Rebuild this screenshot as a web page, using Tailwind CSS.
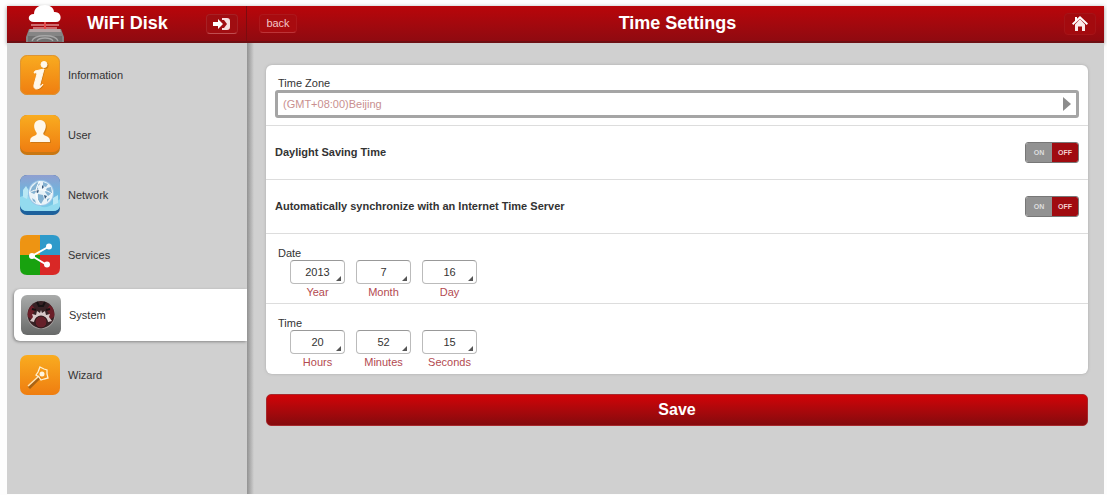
<!DOCTYPE html>
<html lang="en">
<head>
<meta charset="utf-8">
<meta name="viewport" content="width=device-width, initial-scale=1">
<title>WiFi Disk - Time Settings</title>
<script src="https://cdn.jsdelivr.net/npm/@tailwindcss/browser@4"></script>
</head>
<body class="bg-[#fdfdfd] font-['Liberation_Sans',Arial,sans-serif] text-[11px] text-[#333]">
<div class="flex min-h-screen flex-col pt-1.5 pr-[3px] pb-px pl-[7px]">
  <header class="flex h-[37px] border-b-2 border-[#6e1014] bg-linear-to-b from-[#b90509] to-[#8f0a10] text-white shadow-[0_1px_4px_#999]">
    <div class="flex w-60 shrink-0 items-center border-r border-[#7c0b0f] pr-2 pl-[18px]">
      <svg class="h-[37px] w-10 shrink-0" viewBox="0 0 40 37" aria-hidden="true">
        <path d="M4 24h32l3 8v5H1v-5z" fill="#858585"/>
        <path d="M5 24h30l1 3H4z" fill="#b5a5a5"/>
        <path d="M3 31h34v6H3z" fill="#707070"/>
        <path d="M7 36c2-7 24-7 26 0M12 36c2-4 14-4 16 0" fill="none" stroke="#a8a8a8" stroke-width="1.3"/>
        <path d="M6 20h28M8 23h24" stroke="#dc8d8f" stroke-width="1.3"/>
        <path d="M20 17v7" stroke="#e54a4a" stroke-width="2"/>
        <path d="M9 17c-7 0-7-8 0-8C9 3 14 0 20 0c5 0 9 3 9 7 8-1 9 10 2 10z" fill="#fff"/>
      </svg>
      <h1 class="flex-1 pl-[22px] text-[18px] font-bold">WiFi Disk</h1>
      <button type="button" aria-label="Log out" class="flex h-5 w-8 items-center justify-center rounded border border-[#a62125] border-b-[#bf4d50] bg-[#a00d11]">
        <svg class="h-3.5 w-[18px]" viewBox="0 0 18 14" aria-hidden="true">
          <path d="M0 5h5V2l5 5-5 5V9H0z" fill="#fff"/>
          <path d="M9 1h5q3 0 3 3v6q0 3-3 3H9v-2h2l3-4-3-4H9z" fill="#f6dede"/>
        </svg>
      </button>
    </div>
    <div class="grid flex-1 grid-cols-[60px_1fr_60px] items-center pr-2 pl-3">
      <button type="button" class="h-[19px] w-[38px] rounded border border-[#ad171b] border-b-[#bd3438] bg-[#a80b0f] text-[11px] leading-none text-[#f3c6c6]">back</button>
      <h2 class="text-center text-[18px] font-bold">Time Settings</h2>
      <a href="#home" aria-label="Home" class="flex h-[22px] w-8 items-center justify-center justify-self-end rounded border border-[#a51418] bg-[#a30a0e]">
        <svg class="h-[15px] w-4" viewBox="0 0 16 15" aria-hidden="true">
          <path d="M8 0 16 7.500 14.700 9 8 2.800 1.300 9 0 7.500 3 4.700V1h2v1.800z" fill="#fff"/>
          <path d="M8 3l5 5.500V15H10v-4.500H6V15H3V8.500z" fill="#fbeaea"/>
        </svg>
      </a>
    </div>
  </header>

  <div class="flex flex-1 bg-[#d0d0d0]">
    <nav aria-label="Settings" class="w-60 shrink-0 pt-0.5">
      <a href="#information" class="flex h-[60px] items-center gap-2 pl-[13px]">
        <svg class="size-10" viewBox="0 0 40 40" aria-hidden="true">
          <defs>
            <linearGradient id="orange" x2="0" y2="1"><stop stop-color="#f9ac20"/><stop offset="1" stop-color="#ef7d10"/></linearGradient>
          </defs>
          <rect width="40" height="40" rx="7" fill="url(#orange)"/>
          <rect x=".5" y=".5" width="39" height="39" rx="7" fill="none" stroke="#dc9435"/>
          <g transform="translate(1 1)" fill="#b66a13" opacity=".6"><circle cx="24" cy="9.500" r="3.500"/><path d="M15 16l9-2-4 15c-.5 3 1 2 3 0-3 6-10 7-9 1l3-11q0-2-3-1z"/></g>
          <g fill="#fff8ea" stroke="#fff8ea"><circle cx="24" cy="9.500" r="3"/><path d="M15 16l9-2-4 15c-.5 3 1 2 3 0-3 6-10 7-9 1l3-11q0-2-3-1z"/></g>
        </svg>
        <span>Information</span>
      </a>
      <a href="#user" class="flex h-[60px] items-center gap-2 pl-[13px]">
        <svg class="size-10" viewBox="0 0 40 40" aria-hidden="true">
          <rect width="40" height="40" rx="7" fill="#c97712"/>
          <rect width="40" height="37" rx="7" fill="url(#orange)"/>
          <path d="M11 28c0-5 2-5 6-7 1-1 1-2 0-3-5-7-1-12 4-12s8 5 4 12c-1 1-1 2 0 3 4 2 6 2 6 7z" fill="#b66a13" opacity=".6"/>
          <path d="M10 27c0-5 2-5 6-7 1-1 1-2 0-3-4-7-1-12 4-12s8 5 4 12c-1 1-1 2 0 3 4 2 6 2 6 7z" fill="#fff8ea"/>
        </svg>
        <span>User</span>
      </a>
      <a href="#network" class="flex h-[60px] items-center gap-2 pl-[13px]">
        <svg class="size-10" viewBox="0 0 40 40" aria-hidden="true">
          <defs>
            <linearGradient id="sky" x2="0" y2="1"><stop stop-color="#8f9fd0"/><stop offset=".5" stop-color="#6eb6de"/><stop offset="1" stop-color="#7fd2ea"/></linearGradient>
          </defs>
          <rect width="40" height="40" rx="7" fill="#1d619c"/>
          <rect width="40" height="36" rx="7" fill="url(#sky)"/>
          <path d="M0 22q10-4 17 6t23-4v7q-1 5-7 5H7q-6 0-7-6z" fill="#93dbef"/>
          <path d="M3 15l3-4 3 5-2 8-4-2zM33 23l5-3v8l-5 2z" fill="#b9e8f5"/>
          <circle cx="21" cy="18" r="13" fill="#9bc6e8"/>
          <circle cx="21" cy="18" r="12" fill="#e9f3f8"/>
          <path d="M12 12l5-5 3 2-3 3 2 3-5 4-4-2zM23 7l5 2-2 3-3-1zM27 13l4-1 1 6-4 3-3-4zM18 19l5 1 1 4-3 5-3-3zM12 23l3 2 1 3-3-2zM27 24l3-1-3 4z" fill="#84b2d2"/>
          <path d="M17 14l2 1-1 3-3-1zM22 10l2 2-2 2zM24 20l3 1-2 3z" fill="#37597d"/>
          <path d="M9 18c6-5 18-4 23 1M20 6c-6 8-5 17 1 24" fill="none" stroke="#fff"/>
        </svg>
        <span>Network</span>
      </a>
      <a href="#services" class="flex h-[60px] items-center gap-2 pl-[13px]">
        <svg class="size-10" viewBox="0 0 40 40" aria-hidden="true">
          <path d="M20 0v20H0V7q0-7 7-7z" fill="#ee9412"/>
          <path d="M20 0h13q7 0 7 7v13H20z" fill="#2e9aca"/>
          <path d="M0 20h20v20H7q-7 0-7-7z" fill="#18a20f"/>
          <path d="M20 20h20v13q0 7-7 7H20z" fill="#d92826"/>
          <path d="M29 11.500 12 21l15 9" fill="none" stroke="#fff" stroke-width="2"/>
          <g fill="#fff"><circle cx="29" cy="11.500" r="3"/><circle cx="12" cy="21" r="3"/><circle cx="27" cy="29.500" r="3"/></g>
        </svg>
        <span>Services</span>
      </a>
      <a href="#system" aria-current="page" class="my-1 ml-[7px] flex h-[52px] items-center gap-2 rounded-l-md bg-white pl-[7px] shadow-[-1px_1px_3px_#888]">
        <svg class="size-10" viewBox="0 0 40 40" aria-hidden="true">
          <defs>
            <linearGradient id="steel" x2="0" y2="1"><stop stop-color="#a9abaa"/><stop offset="1" stop-color="#686a69"/></linearGradient>
          </defs>
          <rect width="40" height="40" rx="6" fill="url(#steel)"/>
          <circle cx="20" cy="20" r="14" fill="#a7a0a0"/>
          <circle cx="20" cy="19.500" r="13.500" fill="#372225"/>
          <path d="M7 22a13 13 0 0 1 4-12l4 5-3 3 2 3-2 4zM33 22a13 13 0 0 0-4-12l-4 5 3 3-2 3 2 4z" fill="#6b1e28"/>
          <path d="M9 26l3-4-1-3 4 1 1-4 3 2 1-3 1 3 3-2 1 4 4-1-1 3 3 4-4 1q-1-6-7-6t-7 6z" fill="#d8c9c9"/>
          <circle cx="20" cy="27" r="6" fill="#66202a" stroke="#2f1b1e"/>
          <path d="M16 7l2 4h4l2-4M11 14l4 1M29 14l-4 1" stroke="#171213" stroke-width="2" fill="none"/>
        </svg>
        <span>System</span>
      </a>
      <a href="#wizard" class="flex h-[60px] items-center gap-2 pl-[13px]">
        <svg class="size-10" viewBox="0 0 40 40" aria-hidden="true">
          <rect width="40" height="40" rx="7" fill="url(#orange)"/>
          <path d="M9 33 20 22" stroke="#a96314" stroke-width="3"/>
          <path d="M8 31 19 21" stroke="#ffe4b5" stroke-width="1.500"/>
          <path d="M20 12l4 2 3 1 0 4 1 4-4 1-3 1-2-3-3-2 2-3z" fill="none" stroke="#fff1d3" stroke-width="1.300"/>
          <circle cx="22" cy="19" r="2.500" fill="#fff6e0"/>
        </svg>
        <span>Wizard</span>
      </a>
    </nav>

    <main class="flex-1 bg-linear-to-r from-[#929292] to-[#d0d0d0] to-[7px] pt-[22px] pr-4 pb-5 pl-[19px]">
      <form>
        <div class="divide-y divide-[#ddd] rounded-md bg-white shadow-[0_0_3px_#aaa]">
          <div class="h-[61px] px-[9px] pt-[11px]">
            <label for="zone" class="block pl-[3px] leading-[14px]">Time Zone</label>
            <div class="relative">
              <select id="zone" class="block h-7 w-full appearance-none rounded-[3px] border-[3px] border-[#a5a5a5] bg-white pl-[5px] text-[11px] text-[#c98f8f]">
                <option>(GMT+08:00)Beijing</option>
              </select>
              <svg class="pointer-events-none absolute top-[7px] right-2 h-3.5 w-2" viewBox="0 0 8 14" aria-hidden="true"><path d="M0 0l8 7-8 7z" fill="#8c8c8c"/></svg>
            </div>
          </div>
          <label class="flex h-[54px] items-center justify-between px-[9px]">
            <span class="text-[11px] font-bold">Daylight Saving Time</span>
            <input type="checkbox" class="peer sr-only">
            <span aria-hidden="true" class="grid h-[21px] w-[54px] grid-cols-2 overflow-hidden rounded-[3px] border border-[#777] text-center text-[7px] leading-[19px] font-bold">
              <span class="bg-[#929292] text-[#dedede]">ON</span><span class="bg-[#a00b10] text-[#f3d0d0]">OFF</span>
            </span>
          </label>
          <label class="flex h-[54px] items-center justify-between px-[9px]">
            <span class="text-[11px] font-bold">Automatically synchronize with an Internet Time Server</span>
            <input type="checkbox" class="peer sr-only">
            <span aria-hidden="true" class="grid h-[21px] w-[54px] grid-cols-2 overflow-hidden rounded-[3px] border border-[#777] text-center text-[7px] leading-[19px] font-bold">
              <span class="bg-[#929292] text-[#dedede]">ON</span><span class="bg-[#a00b10] text-[#f3d0d0]">OFF</span>
            </span>
          </label>
          <fieldset class="h-[70px] px-3 pt-3">
            <legend class="float-left w-full leading-[14px]">Date</legend>
            <div class="flex gap-[11px] pl-3 text-center text-[#b34a50]">
              <label class="relative flex w-[55px] flex-col-reverse leading-4">Year
                <input type="text" inputmode="numeric" value="2013" class="h-6 w-full rounded-[4px] border border-[#bbb] border-t-[#999] bg-white text-center text-[11px] text-[#333]">
                <svg class="absolute top-4 right-1 size-[5px]" viewBox="0 0 5 5" aria-hidden="true"><path d="M5 0v5H0z" fill="#555"/></svg>
              </label>
              <label class="relative flex w-[55px] flex-col-reverse leading-4">Month
                <input type="text" inputmode="numeric" value="7" class="h-6 w-full rounded-[4px] border border-[#bbb] border-t-[#999] bg-white text-center text-[11px] text-[#333]">
                <svg class="absolute top-4 right-1 size-[5px]" viewBox="0 0 5 5" aria-hidden="true"><path d="M5 0v5H0z" fill="#555"/></svg>
              </label>
              <label class="relative flex w-[55px] flex-col-reverse leading-4">Day
                <input type="text" inputmode="numeric" value="16" class="h-6 w-full rounded-[4px] border border-[#bbb] border-t-[#999] bg-white text-center text-[11px] text-[#333]">
                <svg class="absolute top-4 right-1 size-[5px]" viewBox="0 0 5 5" aria-hidden="true"><path d="M5 0v5H0z" fill="#555"/></svg>
              </label>
            </div>
          </fieldset>
          <fieldset class="h-[70px] px-3 pt-3">
            <legend class="float-left w-full leading-[14px]">Time</legend>
            <div class="flex gap-[11px] pl-3 text-center text-[#b34a50]">
              <label class="relative flex w-[55px] flex-col-reverse leading-4">Hours
                <input type="text" inputmode="numeric" value="20" class="h-6 w-full rounded-[4px] border border-[#bbb] border-t-[#999] bg-white text-center text-[11px] text-[#333]">
                <svg class="absolute top-4 right-1 size-[5px]" viewBox="0 0 5 5" aria-hidden="true"><path d="M5 0v5H0z" fill="#555"/></svg>
              </label>
              <label class="relative flex w-[55px] flex-col-reverse leading-4">Minutes
                <input type="text" inputmode="numeric" value="52" class="h-6 w-full rounded-[4px] border border-[#bbb] border-t-[#999] bg-white text-center text-[11px] text-[#333]">
                <svg class="absolute top-4 right-1 size-[5px]" viewBox="0 0 5 5" aria-hidden="true"><path d="M5 0v5H0z" fill="#555"/></svg>
              </label>
              <label class="relative flex w-[55px] flex-col-reverse leading-4">Seconds
                <input type="text" inputmode="numeric" value="15" class="h-6 w-full rounded-[4px] border border-[#bbb] border-t-[#999] bg-white text-center text-[11px] text-[#333]">
                <svg class="absolute top-4 right-1 size-[5px]" viewBox="0 0 5 5" aria-hidden="true"><path d="M5 0v5H0z" fill="#555"/></svg>
              </label>
            </div>
          </fieldset>
        </div>
        <button type="submit" class="mt-5 h-8 w-full rounded-[5px] border border-[#a6282c] bg-linear-to-b from-[#d20206] to-[#850a0d] text-[16px] font-bold text-white">Save</button>
      </form>
    </main>
  </div>
</div>
</body>
</html>
